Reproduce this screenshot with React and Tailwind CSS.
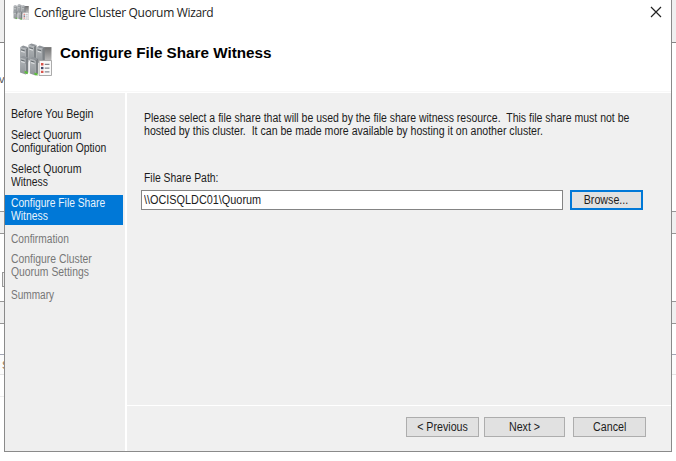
import React from "react";

const towers = [
  [1, 3],
  [9, 1],
  [17, 3],
  [1, 13],
  [10.5, 14],
];

const Cluster = ({ className }) => (
  <svg viewBox="0 0 32 32" className={className}>
    <defs>
      <linearGradient id="tower" x1="0" y1="0" x2="0" y2="1">
        <stop offset="0" stopColor="#b4b8bb" />
        <stop offset="1" stopColor="#8f9498" />
      </linearGradient>
      <linearGradient id="back" x1="0" y1="0" x2="0" y2="1">
        <stop offset="0" stopColor="#6f6f6f" />
        <stop offset="1" stopColor="#c0c0c0" />
      </linearGradient>
    </defs>
    <rect x="23" y="4" width="8.5" height="14" fill="url(#back)" />
    {towers.map(([x, y]) => (
      <g key={`${x}-${y}`}>
        <path d={`M${x} ${y + 1}l5.500 1.500v15l-5.500-2z`} fill="url(#tower)" />
        <path d={`M${x + 5.5} ${y + 2.5}l2.500-1.500v14.500l-2.500 2z`} fill="#7c8185" />
        <path d={`M${x} ${y + 1}l3-1.500 5 1.500-2.500 1.500z`} fill="#90959a" />
        <path d={`M${x + 1} ${y + 3.500}l3.500 1`} stroke="#5e6469" strokeWidth="0.9" />
        <path d={`M${x + 1} ${y + 5}l3.500 1`} stroke="#e6e8e9" strokeWidth="0.9" />
      </g>
    ))}
    <path d="M5.500 27l3 1v2.200l-3-1zM15 28.500l3 1v2.200l-3-1z" fill="#5cbf3a" />
    <path d="M19.500 17h12v14.500h-12z" fill="#fafafa" stroke="#a3a3a3" strokeWidth="0.9" />
    <path d="M21.300 19.500h2.400v2.200h-2.400zM21.300 27h2.400v2.200h-2.400z" fill="#d9534b" />
    <path d="M21.300 23.200h2.400v2.200h-2.400z" fill="#424868" />
    <path d="M25 20.700h4.500M25 24.300h4.500M25 28h4.500" stroke="#85878f" strokeWidth="1.100" />
  </svg>
);

function Strip({ side }) {
  const left = side === "left";
  return (
    <div className="relative flex h-[461px] w-full flex-col overflow-hidden bg-white">
      <div className="h-[43px] shrink-0 border-b border-[#858585] bg-[#f0f0f0]" />
      <div className="h-[168px] shrink-0 bg-white" />
      <div className="h-[23px] shrink-0 border-y border-[#969696] bg-[#f0f0f0]" />
      <div className="h-[67px] shrink-0 bg-white" />
      <div className="h-[23px] shrink-0 border-y border-[#969696] bg-[#f0f0f0]" />
      <div className="h-[31px] shrink-0 border-b border-[#a2a6b4] bg-white" />
      <div className="h-[20px] shrink-0 border-b border-[#e4e4e4] bg-[#fcfcfc]" />
      {left && <div className="h-[22px] shrink-0 border-b border-[#eeeeee]" />}
      {left && (
        <>
          <span className="absolute top-[73px] -left-[1px] text-[11px] leading-3 text-[#555]">v</span>
          <div className="absolute top-[272px] left-[2px] h-[15px] w-[4px] border border-[#999] bg-[#eee]" />
          <span className="absolute top-[359px] left-[2px] text-[11px] leading-3 text-[#9a754e]">S</span>
        </>
      )}
    </div>
  );
}

const Line = ({ scale = "scale-x-[0.865]", children }) => (
  <span className={`block w-max origin-left whitespace-pre ${scale}`}>{children}</span>
);

const Button = ({ className, children }) => (
  <button className={`flex h-[20px] shrink-0 items-center justify-center bg-[#e1e1e1] leading-none whitespace-nowrap ${className}`}>
    <span className="inline-block scale-x-[0.89]">{children}</span>
  </button>
);

export default function App() {
  return (
    <div className="flex h-[461px] w-[676px] overflow-hidden bg-white font-['Liberation_Sans',Arial,sans-serif] text-[12px] text-[#1c1c1c]">
      <div className="w-[4px] shrink-0"><Strip side="left" /></div>
      <main className="flex h-[452px] w-[668px] shrink-0 flex-col border-x border-b border-[#8a8a8a] bg-white">
        <header className="h-[92px] shrink-0 border-b border-[#f8f8f8] pt-px">
          <div className="flex h-[26px] items-start pl-[8px]">
            <Cluster className="mt-[3px] h-[16px] w-[16px]" />
            <h1 className="mt-[3px] ml-[5px] font-['Open_Sans',sans-serif] text-[12px] leading-[18px] tracking-[-0.33px] whitespace-nowrap text-[#222]">
              Configure Cluster Quorum Wizard
            </h1>
            <svg viewBox="0 0 12 12" className="mt-[5px] mr-[9px] ml-auto h-[12px] w-[12px]">
              <path d="M1 1l10 10M11 1L1 11" stroke="#222" strokeWidth="1.200" fill="none" />
            </svg>
          </div>
          <div className="flex pl-[14px]">
            <Cluster className="mt-[16px] h-[33px] w-[33px]" />
            <h2 className="mt-[17px] ml-[8px] origin-left scale-x-[1.088] text-[14px] leading-[18px] font-bold whitespace-nowrap text-black">
              Configure File Share Witness
            </h2>
          </div>
        </header>
        <div className="flex min-h-0 grow pt-[1px]">
          <nav className="flex w-[120px] shrink-0 flex-col bg-[#efefef] pt-[15px] leading-[13px]">
            <div className="pl-[6px]"><Line scale="scale-x-[0.89]">Before You Begin</Line></div>
            <div className="mt-[8px] pl-[6px]">
              <Line scale="scale-x-[0.88]">Select Quorum</Line>
              <Line>Configuration Option</Line>
            </div>
            <div className="mt-[8px] pl-[6px]">
              <Line scale="scale-x-[0.88]">Select Quorum</Line>
              <Line>Witness</Line>
            </div>
            <div className="mt-[6px] mr-[2px] h-[30px] bg-[#0078d7] pt-[2px] pl-[6px] text-[#e9f4fc]">
              <Line scale="scale-x-[0.855]">Configure File Share</Line>
              <Line>Witness</Line>
            </div>
            <div className="mt-[8px] pl-[6px] text-[#777]"><Line scale="scale-x-[0.85]">Confirmation</Line></div>
            <div className="mt-[7px] pl-[6px] text-[#777]">
              <Line>Configure Cluster</Line>
              <Line>Quorum Settings</Line>
            </div>
            <div className="mt-[10px] pl-[6px] text-[#777]"><Line scale="scale-x-[0.84]">Summary</Line></div>
          </nav>
          <div className="ml-[2px] flex min-w-0 grow flex-col bg-[#f0f0f0]">
            <section className="h-[313px] shrink-0 border-b border-white pt-[19px] pl-[14px]">
              <div className="pl-[3px] leading-[13px]">
                <Line scale="scale-x-[0.875]">Please select a file share that will be used by the file share witness resource.  This file share must not be</Line>
                <Line scale="scale-x-[0.882]">hosted by this cluster.  It can be made more available by hosting it on another cluster.</Line>
              </div>
              <label className="mt-[33px] block pl-[3px] leading-[14px]"><Line>File Share Path:</Line></label>
              <div className="mt-[5px] flex">
                <div className="h-[20px] w-[422px] shrink-0 border border-[#848484] bg-white pl-[2px] leading-[18px]">
                  <Line scale="scale-x-[0.905]">{"\\\\OCISQLDC01\\Quorum"}</Line>
                </div>
                <Button className="ml-[7px] w-[73px] border-2 border-[#0078d7]">Browse...</Button>
              </div>
            </section>
            <footer className="flex pt-[11px] pl-[279px]">
              <Button className="w-[73px] border border-[#adadad]">&lt; Previous</Button>
              <Button className="ml-[5px] w-[81px] border border-[#adadad]">Next &gt;</Button>
              <Button className="ml-[8px] w-[73px] border border-[#adadad]">Cancel</Button>
            </footer>
          </div>
        </div>
      </main>
      <div className="w-[4px] shrink-0"><Strip side="right" /></div>
    </div>
  );
}
